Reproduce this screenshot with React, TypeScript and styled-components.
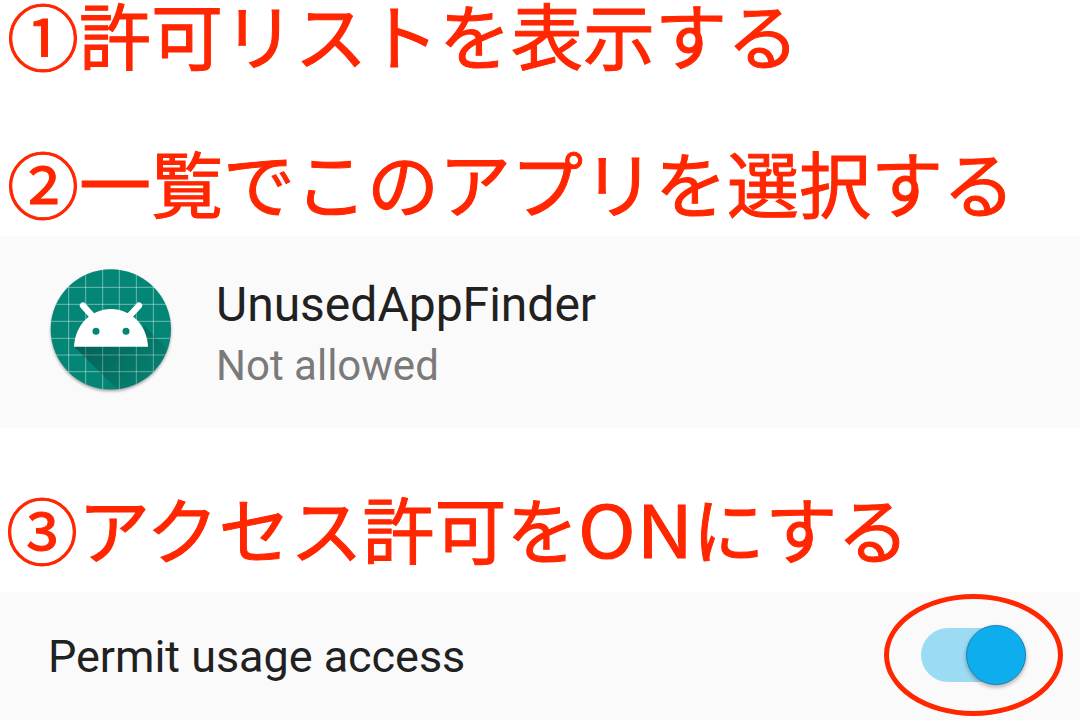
import React from "react";
import styled, { createGlobalStyle } from "styled-components";

const GlobalStyle = createGlobalStyle`
  body { margin: 0; background: #fff; }
`;

const Page = styled.main`
  width: 1080px;
  height: 720px;
  display: flex;
  flex-direction: column;
  background: #fff;
  font-family: Roboto, sans-serif;
`;

const Step = styled.h2<{ $height: number; $top: number; $left: number }>`
  flex: none;
  box-sizing: border-box;
  display: flex;
  align-items: flex-start;
  height: ${(p) => p.$height}px;
  margin: 0;
  padding: ${(p) => p.$top}px 0 0 ${(p) => p.$left}px;
  font: 400 72px/66px "Noto Sans CJK JP", sans-serif;
  white-space: nowrap;
  color: #ff2600;
  -webkit-text-stroke: 1px #ff2600;
  stroke-linejoin: round;
`;

const StepNumber = styled.span`
  flex: none;
  width: 72px;
`;

const StepText = styled.span`
  margin-top: -1px;
`;

const Latin = styled.span`
  display: inline-block;
  width: 114px;
  letter-spacing: 1px;
  transform: scaleX(1.08);
  transform-origin: left;
`;

const AppRow = styled.section`
  flex: none;
  display: flex;
  align-items: center;
  box-sizing: border-box;
  height: 192px;
  padding-left: 40px;
  background: #fafafa;
`;

const AppIcon = styled.svg`
  flex: none;
  width: 140px;
  height: 140px;
  margin: 0 36px 4px 0;
`;

const AppText = styled.div`
  display: flex;
  flex-direction: column;
  padding-top: 3px;
`;

const AppName = styled.span`
  font-size: 48px;
  line-height: 64px;
  color: #212121;
`;

const AppStatus = styled.span`
  font-size: 42px;
  line-height: 57px;
  color: #7a7a7a;
`;

const PermitRow = styled.section`
  flex: none;
  display: flex;
  align-items: center;
  justify-content: space-between;
  box-sizing: border-box;
  height: 128px;
  padding: 0 17px 0 48px;
  background: #fafafa;
`;

const PermitLabel = styled.span`
  font-size: 45px;
  line-height: 60px;
  letter-spacing: -0.05px;
  padding-top: 1px;
  color: #212121;
`;

const Highlight = styled.div`
  display: flex;
  align-items: center;
  justify-content: center;
  box-sizing: border-box;
  width: 179px;
  height: 122px;
  margin-bottom: 2px;
  border: 5px solid #ff2600;
  border-radius: 50%;
`;

const Track = styled.div`
  display: flex;
  align-items: center;
  justify-content: flex-end;
  width: 105px;
  height: 54px;
  border-radius: 27px;
  background: #9bdcf4;
`;

const Thumb = styled.div`
  flex: none;
  box-sizing: border-box;
  width: 60px;
  height: 60px;
  border: 1px solid #1585b8;
  border-radius: 50%;
  background: #0eaeee;
  box-shadow: 0 2px 4px rgba(0, 0, 0, 0.32);
`;

const gridX = [86, 137, 188, 238, 289, 340];
const gridY = [82, 133, 184, 235, 285, 335];

function AndroidIcon() {
  return (
    <AppIcon viewBox="0 0 420 420" aria-hidden="true">
      <defs>
        <clipPath id="disc"><circle cx="212.5" cy="208" r="180.5" /></clipPath>
        <linearGradient id="cast" x1="110" y1="180" x2="300" y2="370" gradientUnits="userSpaceOnUse">
          <stop offset="0.2" stopColor="#000" stopOpacity="0.28" />
          <stop offset="1" stopColor="#000" stopOpacity="0.06" />
        </linearGradient>
        <filter id="soft" x="-10%" y="-10%" width="120%" height="120%">
          <feGaussianBlur stdDeviation="4" />
        </filter>
      </defs>
      <circle cx="212.5" cy="214" r="180" fill="#000" opacity="0.35" filter="url(#soft)" />
      <g clipPath="url(#disc)">
        <rect width="420" height="420" fill="#048676" />
        <g stroke="#fff" strokeOpacity="0.42" strokeWidth="3">
          {gridX.map((x) => <path key={x} d={`M${x} 20V400`} />)}
          {gridY.map((y) => <path key={y} d={`M20 ${y}H400`} />)}
        </g>
        <path d="M103 260L250 407H420V305L310 195L324 260Z" fill="url(#cast)" />
      </g>
      <path d="M129 137L158 169M297 137L267 169" stroke="#fff" strokeWidth="19" strokeLinecap="round" />
      <path d="M102 260C105 196 152 147 213 147S321 196 324 260Z" fill="#fff" />
      <circle cx="168" cy="214" r="10.5" fill="#048676" />
      <circle cx="258" cy="214" r="10.5" fill="#048676" />
    </AppIcon>
  );
}

export default function App() {
  return (
    <>
      <GlobalStyle />
      <Page>
        <Step $height={147} $top={1} $left={7}>
          <StepNumber>①</StepNumber>
          <StepText>許可リストを表示する</StepText>
        </Step>
        <Step $height={89} $top={2} $left={7}>
          <StepNumber>②</StepNumber>
          <StepText>一覧でこのアプリを選択する</StepText>
        </Step>
        <AppRow>
          <AndroidIcon />
          <AppText>
            <AppName>UnusedAppFinder</AppName>
            <AppStatus>Not allowed</AppStatus>
          </AppText>
        </AppRow>
        <Step $height={164} $top={67} $left={6}>
          <StepNumber>③</StepNumber>
          <StepText>アクセス許可を<Latin>ON</Latin>にする</StepText>
        </Step>
        <PermitRow>
          <PermitLabel>Permit usage access</PermitLabel>
          <Highlight>
            <Track>
              <Thumb />
            </Track>
          </Highlight>
        </PermitRow>
      </Page>
    </>
  );
}
